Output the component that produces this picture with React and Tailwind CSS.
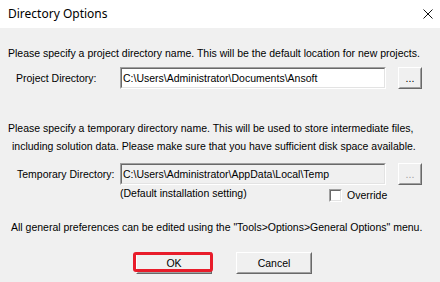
import React from 'react';

function Sunken({children, disabled, className=''}){
  return (
    <div className={"border border-t-[#a0a0a0] border-l-[#a0a0a0] border-b-white border-r-white "+className}>
      <div className={"h-full border border-t-[#696969] border-l-[#696969] border-b-[#e3e3e3] border-r-[#e3e3e3] flex items-center px-[1px] "+(disabled?'bg-[#f0f0f0]':'bg-white')}>
        {children}
      </div>
    </div>
  );
}

function Btn({children, className='', disabled}){
  return (
    <div className={"border border-t-white border-l-white border-b-[#696969] border-r-[#696969] "+className}>
      <div className={"h-full border border-t-[#f0f0f0] border-l-[#f0f0f0] border-b-[#a0a0a0] border-r-[#a0a0a0] bg-[#f0f0f0] flex items-center justify-center "+(disabled?'text-[#a0a0a0]':'text-black')}>
        {children}
      </div>
    </div>
  );
}

export default function App(){
  return (
    <div className="w-[440px] h-[282px] bg-[#f0f0f0] relative overflow-hidden flex flex-col text-black text-[10.5px] leading-[18px] whitespace-nowrap" style={{fontFamily:'"Liberation Sans", Arial, sans-serif'}}>
      <div className="h-[28px] bg-white flex items-center justify-between pl-2 pr-[7px]">
        <span className="text-[12px]" style={{fontFamily:'"Noto Sans", "Open Sans", sans-serif'}}>Directory Options</span>
        <svg width="10" height="10" viewBox="0 0 10 10"><path d="M0.5 0.5L9.5 9.5M9.5 0.5L0.5 9.5" stroke="#111" strokeWidth="1"/></svg>
      </div>

      <div className="px-2 pt-[16px]">
        <div>Please specify a project directory name. This will be the default location for new projects.</div>
        <div className="flex items-center mt-[5px] h-[22px]">
          <div className="w-[112px] pl-2">Project Directory:</div>
          <Sunken className="w-[266px] h-[22px]">C:\Users\Administrator\Documents\Ansoft</Sunken>
          <Btn className="ml-[12px] w-[24px] h-[22px]">...</Btn>
        </div>

        <div className="mt-[30px]">Please specify a temporary directory name. This will be used to store intermediate files,</div>
        <div className="pl-[4px]">including solution data. Please make sure that you have sufficient disk space available.</div>
        <div className="flex items-center mt-[8px] h-[22px]">
          <div className="w-[112px] pl-[9px]">Temporary Directory:</div>
          <Sunken disabled className="w-[266px] h-[22px]">C:\Users\Administrator\AppData\Local\Temp</Sunken>
          <Btn disabled className="ml-[12px] w-[24px] h-[22px]">...</Btn>
        </div>
        <div className="flex items-start h-[16px] mt-[1px]">
          <div className="w-[112px]"></div>
          <div className="leading-[14px] w-[209px]">(Default installation setting)</div>
          <div className="mt-[3px] w-[13px] h-[13px] border border-t-[#a0a0a0] border-l-[#a0a0a0] border-b-white border-r-white">
            <div className="h-full border border-t-[#696969] border-l-[#696969] border-b-[#e3e3e3] border-r-[#e3e3e3] bg-white"></div>
          </div>
          <div className="ml-[5px] leading-[14px] mt-[2px]">Override</div>
        </div>

        <div className="mt-[16px] pl-[3px]">All general preferences can be edited using the "Tools&gt;Options&gt;General Options" menu.</div>

        <div className="flex mt-[16px] pl-[128px] gap-[24px]">
          <div className="relative">
            <Btn className="w-[76px] h-[22px]">OK</Btn>
            <div className="absolute left-[-3px] top-0 w-[80px] h-[20px] border-[3px] border-[#e81c2a] rounded-[3px]"></div>
          </div>
          <Btn className="w-[76px] h-[22px]">Cancel</Btn>
        </div>
      </div>
    </div>
  );
}
